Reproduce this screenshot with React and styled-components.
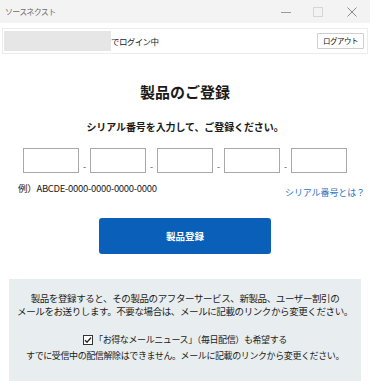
import styled, { createGlobalStyle } from "styled-components";

const GlobalStyle = createGlobalStyle`
  html, body {
    margin: 0;
    padding: 0;
    background: #ffffff;
  }
  body {
    font-family: "Noto Sans CJK JP", "Noto Sans", sans-serif;
    color: #1a1a1a;
  }
`;

const SEGMENTS = 5;

function App() {
  const inputs = [];
  for (let i = 0; i < SEGMENTS; i++) {
    if (i > 0) inputs.push(<St.Dash key={`d${i}`}>-</St.Dash>);
    inputs.push(<St.SerialInput key={`i${i}`} />);
  }

  return (
    <>
      <GlobalStyle />
      <St.Window>
        {/* タイトルバー */}
        <St.TitleBar>
          <St.AppName>ソースネクスト</St.AppName>
          <St.Controls>
            <St.Control>
              <svg width="10" height="10" viewBox="0 0 10 10">
                <path d="M0 5.5h10" stroke="#9a9a9a" strokeWidth="1" />
              </svg>
            </St.Control>
            <St.Control>
              <svg width="10" height="10" viewBox="0 0 10 10">
                <rect x="0.5" y="0.5" width="9" height="9" fill="none" stroke="#d6d6d6" />
              </svg>
            </St.Control>
            <St.Control>
              <svg width="10" height="10" viewBox="0 0 10 10">
                <path d="M0.5 0.5l9 9M9.5 0.5l-9 9" stroke="#8a8a8a" strokeWidth="1" />
              </svg>
            </St.Control>
          </St.Controls>
        </St.TitleBar>

        {/* ログイン情報 */}
        <St.LoginBar>
          <St.UserMask />
          <St.LoginText>でログイン中</St.LoginText>
          <St.LogoutButton>ログアウト</St.LogoutButton>
        </St.LoginBar>

        <St.Main>
          <St.Title>製品のご登録</St.Title>
          <St.Lead>シリアル番号を入力して、ご登録ください。</St.Lead>

          <St.InputRow>{inputs}</St.InputRow>

          <St.HintRow>
            <St.Example>例）ABCDE-0000-0000-0000-0000</St.Example>
            <St.HelpLink href="#">シリアル番号とは？</St.HelpLink>
          </St.HintRow>

          <St.SubmitButton>製品登録</St.SubmitButton>
        </St.Main>

        {/* 案内パネル */}
        <St.InfoPanel>
          <St.Notice>
            製品を登録すると、その製品のアフターサービス、新製品、ユーザー割引の
            <br />
            メールをお送りします。不要な場合は、メールに記載のリンクから変更ください。
          </St.Notice>
          <St.CheckLabel>
            <St.CheckBox>
              <svg width="8" height="8" viewBox="0 0 8 8">
                <path d="M1 4.2l2 2L7 1.6" fill="none" stroke="#222" strokeWidth="1.4" />
              </svg>
            </St.CheckBox>
            「お得なメールニュース」（毎日配信）も希望する
          </St.CheckLabel>
          <St.SmallNote>
            すでに受信中の配信解除はできません。メールに記載のリンクから変更ください。
          </St.SmallNote>
        </St.InfoPanel>
      </St.Window>
    </>
  );
}

export default App;

const St = {
  Window: styled.div`
    display: flex;
    flex-direction: column;
    width: 370px;
    height: 381px;
    overflow: hidden;
    background: #ffffff;
  `,

  /* タイトルバー */
  TitleBar: styled.header`
    display: flex;
    align-items: center;
    justify-content: space-between;
    height: 23px;
    padding-left: 5px;
    background: #f3f3f3;
  `,

  AppName: styled.span`
    font-size: 8px;
    color: #6e6e6e;
    letter-spacing: -0.7px;
  `,

  Controls: styled.div`
    display: flex;
    align-items: center;
    height: 100%;
  `,

  Control: styled.span`
    display: flex;
    align-items: center;
    justify-content: center;
    width: 32px;
    height: 100%;
    &:last-child {
      width: 36px;
    }
  `,

  /* ログイン情報 */
  LoginBar: styled.div`
    display: flex;
    align-items: center;
    height: 24px;
    margin: 5px 2px 0;
    padding: 0 3px 0 1px;
    border: 1px solid #ececec;
  `,

  UserMask: styled.div`
    width: 107px;
    height: 20px;
    background: #e6e6e6;
  `,

  LoginText: styled.span`
    font-size: 8.5px;
    letter-spacing: -0.6px;
  `,

  LogoutButton: styled.button`
    margin-left: auto;
    height: 16px;
    padding: 0 5px;
    border: 1px solid #cfcfcf;
    border-radius: 1px;
    background: #ffffff;
    font-family: inherit;
    font-size: 7.5px;
    line-height: 14px;
    letter-spacing: -0.5px;
    color: #111;
  `,

  Main: styled.main`
    display: flex;
    flex-direction: column;
    align-items: center;
  `,

  Title: styled.h1`
    margin: 27px 0 0;
    font-size: 15px;
    line-height: 22px;
    font-weight: 700;
  `,

  Lead: styled.p`
    margin: 16px 0 0;
    font-size: 10px;
    line-height: 16px;
    font-weight: 700;
    letter-spacing: -0.1px;
  `,

  /* シリアル入力 */
  InputRow: styled.div`
    display: flex;
    align-items: flex-end;
    margin-top: 13px;
  `,

  SerialInput: styled.input`
    box-sizing: border-box;
    width: 56px;
    height: 25px;
    border: 1px solid #a9a9a9;
    background: #fff;
  `,

  Dash: styled.span`
    width: 11px;
    font-size: 9px;
    line-height: 12px;
    text-align: center;
    color: #555;
  `,

  HintRow: styled.div`
    display: flex;
    align-items: flex-start;
    justify-content: space-between;
    align-self: stretch;
    padding: 8px 5px 0 18px;
  `,

  Example: styled.span`
    font-size: 9.5px;
    line-height: 14px;
    letter-spacing: -0.3px;
  `,

  HelpLink: styled.a`
    margin-top: 5px;
    font-size: 9px;
    line-height: 14px;
    color: #2a78c2;
    text-decoration: none;
    letter-spacing: -0.1px;
  `,

  SubmitButton: styled.button`
    width: 172px;
    height: 36px;
    margin-top: 18px;
    border: none;
    border-radius: 3px;
    background: #0a5fb8;
    color: #ffffff;
    font-family: inherit;
    font-size: 9.5px;
    font-weight: 700;
  `,

  /* 案内パネル */
  InfoPanel: styled.section`
    display: flex;
    flex-direction: column;
    align-items: center;
    flex: 1;
    margin: 25px 9px 0;
    padding-top: 13px;
    background: #e8eef0;
  `,

  Notice: styled.p`
    margin: 0;
    font-size: 9.5px;
    line-height: 12.5px;
    text-align: center;
    letter-spacing: -0.4px;
  `,

  CheckLabel: styled.label`
    display: flex;
    align-items: center;
    margin-top: 16px;
    font-size: 9px;
    line-height: 14px;
    letter-spacing: -0.4px;
  `,

  CheckBox: styled.span`
    display: flex;
    align-items: center;
    justify-content: center;
    box-sizing: border-box;
    width: 10px;
    height: 10px;
    margin-right: 1px;
    border: 1px solid #333;
    background: #fff;
  `,

  SmallNote: styled.p`
    margin: 2px 0 0;
    font-size: 9px;
    line-height: 13px;
    letter-spacing: -0.4px;
  `,
};
